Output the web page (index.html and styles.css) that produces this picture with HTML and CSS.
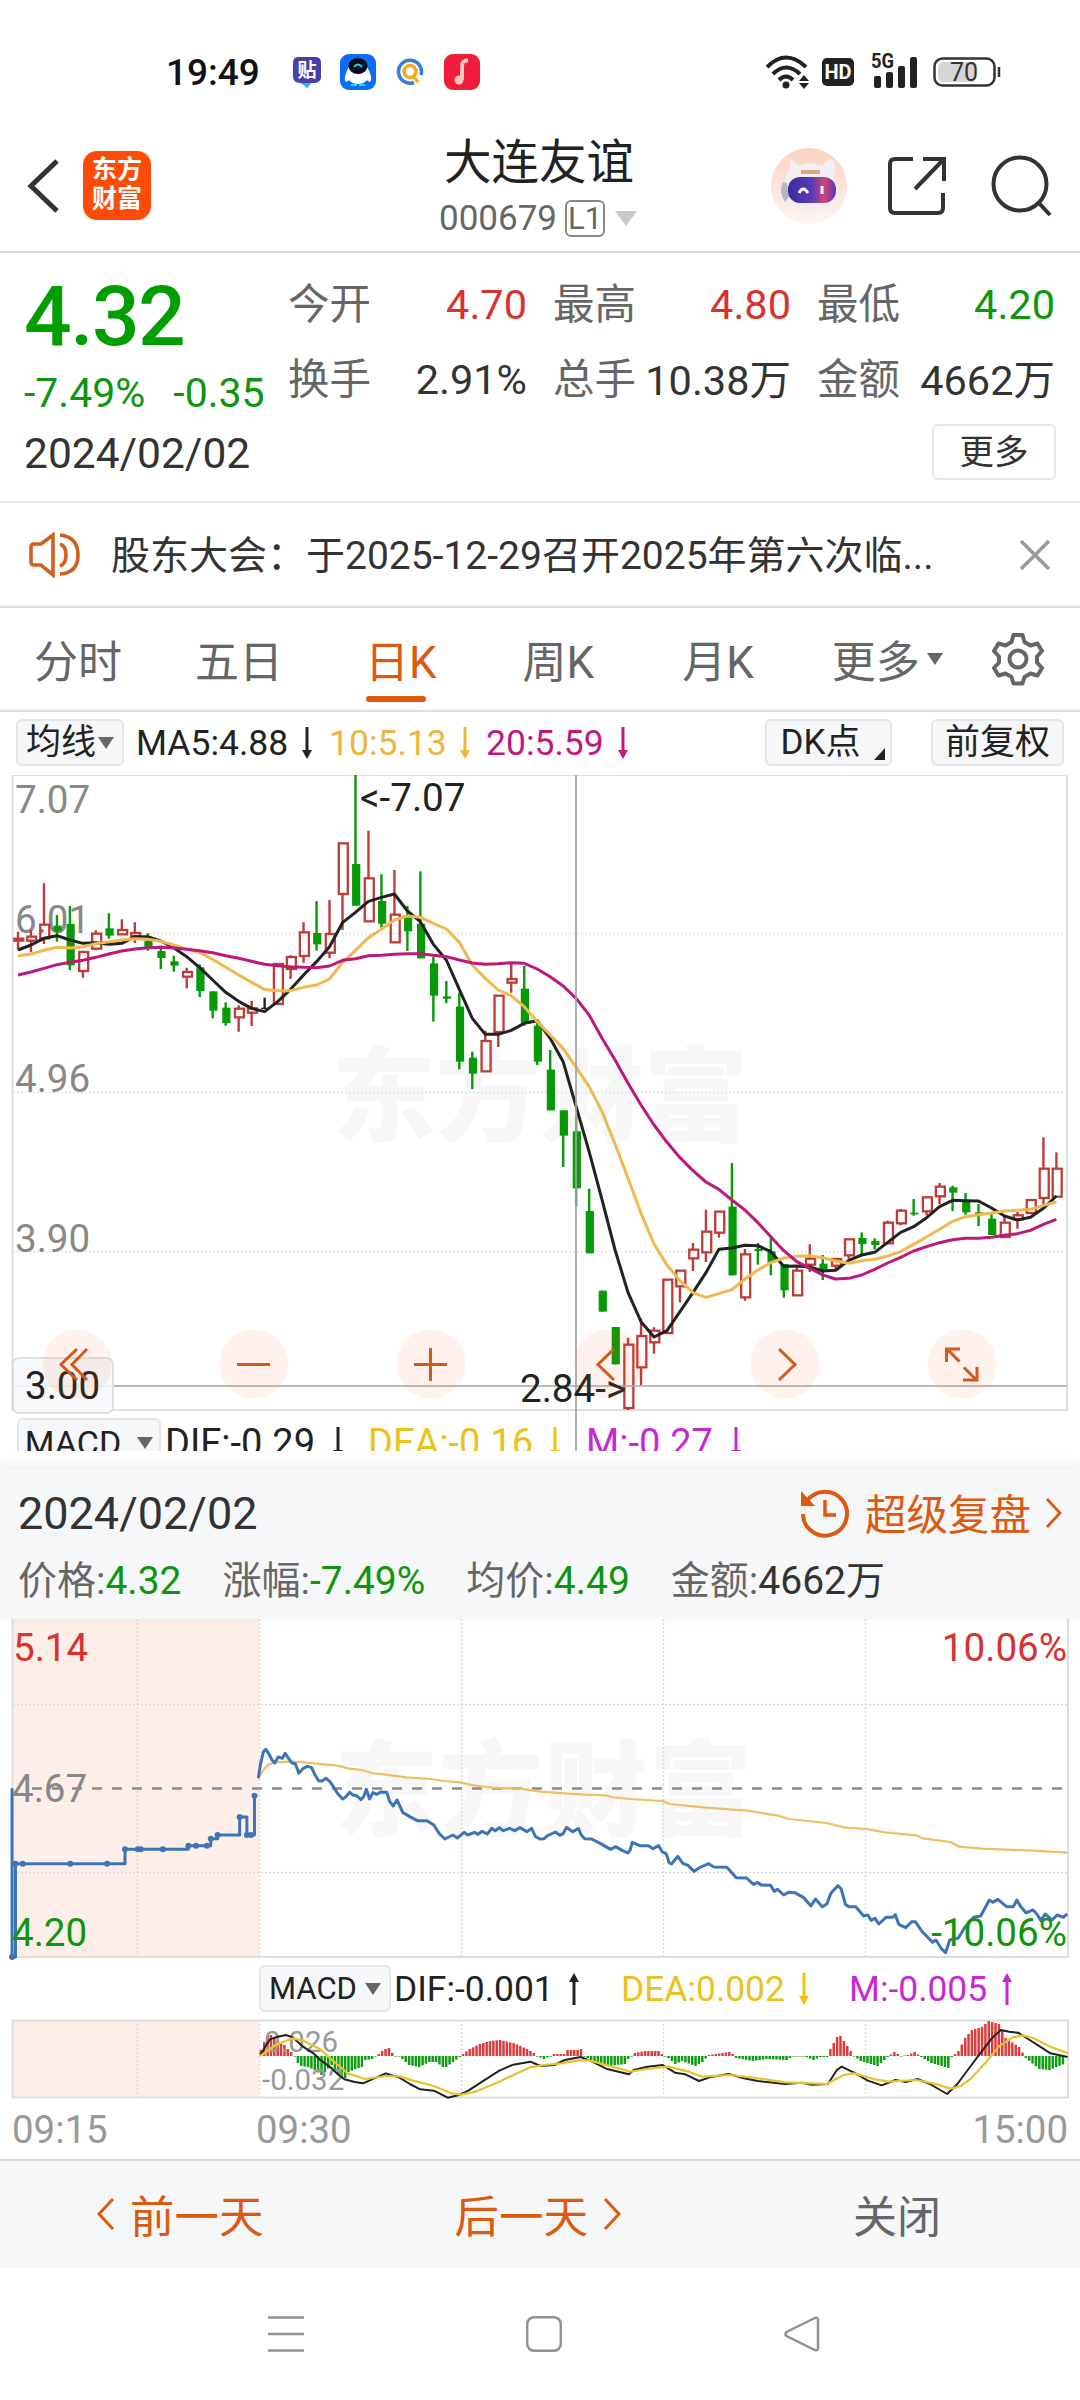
FILE: index.html
```
<!DOCTYPE html>
<html lang="zh-CN">
<head>
    <meta charset="UTF-8">
    <meta name="viewport" content="width=device-width, initial-scale=1.0">
    <title>大连友谊 000679</title>
    <link rel="stylesheet" href="styles.css">
</head>
<body>
    <div class="status-bar">
        <span class="clock">19:49</span>
        <svg class="app-tie" width="28" height="32" viewBox="0 0 28 32"><path d="M5 1h18q5 0 5 6v14q0 5-6 6h-4l-4 5-4-5H6q-6-1-6-6V7q0-6 5-6z" fill="#4a3fa8"/><path d="M2 24q6 3 12 8l4-5H6z" fill="#26b9e8"/><text x="14" y="21" font-size="19" font-weight="700" fill="#fff" text-anchor="middle">贴</text></svg>
        <svg class="app-qq" width="36" height="36" viewBox="0 0 36 36"><rect width="36" height="36" rx="9" fill="#0b6cf5"/><path d="M9 13h18q5 8 4 14-2 2-4-1-3 4-9 4t-9-4q-2 3-4 1-1-6 4-14z" fill="#fff"/><ellipse cx="18" cy="12" rx="9.500" ry="8" fill="#06101c"/><path d="M14 13q4-5 8 0" fill="none" stroke="#29d3e8" stroke-width="2"/><path d="M11 30h6v2h-6zM19 30h6v2h-6z" fill="#19dfe0"/></svg>
        <svg class="app-search" width="28" height="28" viewBox="0 0 28 28" fill="none" stroke-width="3.500"><path d="M18 24.500A11.500 11.500 0 1 1 25 17" stroke="#3a7be0"/><circle cx="14" cy="13.500" r="6" stroke="#f6a823"/><path d="M17 18l5 6" stroke="#f6a823"/></svg>
        <svg class="app-music" width="36" height="36" viewBox="0 0 36 36"><rect width="36" height="36" rx="9" fill="#f01d3a"/><path d="M24 6q-6 1-6 6v14" fill="none" stroke="#ffc4c4" stroke-width="4"/><circle cx="15" cy="26" r="4.500" fill="#ffc4c4"/></svg>
        <svg class="wifi" width="44" height="34" viewBox="0 0 44 34" fill="none" stroke="#222" stroke-width="4"><path d="M1 12Q20-7 40 12M7 19q13-13 27 0M13 25q7-7 14 0"/><circle cx="20" cy="30" r="3.500" fill="#222" stroke="none"/><path d="M33 26l5-6 5 6zM33 28h10l-5 6z" fill="#222" stroke="none"/></svg>
        <span class="hd">HD</span>
        <svg class="signal" width="46" height="38" viewBox="0 -4 46 38" fill="#222"><text x="0" y="13" font-size="20" font-weight="700" textLength="23" lengthAdjust="spacingAndGlyphs">5G</text><rect x="3" y="21" width="7" height="12" rx="2"/><rect x="15" y="17" width="7" height="16" rx="2"/><rect x="27" y="11" width="7" height="22" rx="2"/><rect x="39" y="2" width="7" height="31" rx="2"/></svg>
        <svg class="battery" width="68" height="30" viewBox="0 0 68 30"><rect x="1.500" y="1.500" width="60" height="27" rx="8" fill="#fff" stroke="#333" stroke-width="2.500"/><path d="M11 5h30v20H11q-6 0-6-6v-8q0-6 6-6z" fill="#d5d5d5"/><path d="M66 10v10" stroke="#333" stroke-width="2.500"/><text x="31" y="24" font-size="25" fill="#333" text-anchor="middle">70</text></svg>
    </div>

    <header class="header">
        <svg class="back" width="34" height="58" viewBox="0 0 34 58"><path d="M31 4L5 29l26 25" fill="none" stroke="#333" stroke-width="5"/></svg>
        <div class="logo">东方<br>财富</div>
        <div class="stock">
            <h1>大连友谊</h1>
            <div class="code">000679<span class="level">L1</span><i class="arrow-down"></i></div>
        </div>
        <svg class="robot" width="76" height="76" viewBox="0 0 76 76">
            <defs>
                <linearGradient id="halo" x1="0" y1="0" x2="0" y2="1"><stop offset="0" stop-color="#fcd2c2"/><stop offset="1" stop-color="#fff5f0"/></linearGradient>
                <linearGradient id="visor"><stop offset="0" stop-color="#3a2b9e"/><stop offset=".5" stop-color="#5a3ab8"/><stop offset=".75" stop-color="#d0447a"/><stop offset="1" stop-color="#5a3ab8"/></linearGradient>
            </defs>
            <circle cx="38" cy="38" r="38" fill="url(#halo)"/>
            <path d="M20 19q-3-7 1-7 3 1 6 6 10-6 24 0 4-6 10-7 4 1 3 12l-2 8q6 6 6 18-2 6-8 8-8 5-22 5-17 0-22-8-8-3-7-12l5-11q2-8 6-12z" fill="#f1eff3"/>
            <path d="M12 34q-5 10 2 20l4-5-2-14z" fill="#b9b5c4"/>
            <rect x="17" y="29" width="48" height="26" rx="12" fill="url(#visor)"/>
            <path d="M30 24h19" stroke="#d9a87a" stroke-width="4"/>
            <path d="M28 45q4-8 9 0M51 38v8" fill="none" stroke="#fff" stroke-width="3"/>
        </svg>
        <svg class="share" width="58" height="58" viewBox="0 0 58 58" fill="none" stroke="#333" stroke-width="4"><path d="M25 2H7Q2 2 2 7v44q0 5 5 5h43q5 0 5-5V36M35 2h21v22M55 3L27 32"/></svg>
        <svg class="search" width="62" height="62" viewBox="0 0 62 62" fill="none" stroke="#333" stroke-width="4"><circle cx="29" cy="29" r="26.500"/><path d="M47 47l12 13"/></svg>
    </header>

    <section class="quote">
        <div class="price-box">
            <div class="price">4.32</div>
            <div class="change"><span>-7.49%</span><span>-0.35</span></div>
        </div>
        <div class="stats">
            <div class="stat"><span>今开</span><b class="red">4.70</b></div>
            <div class="stat"><span>最高</span><b class="red">4.80</b></div>
            <div class="stat"><span>最低</span><b class="green">4.20</b></div>
            <div class="stat"><span>换手</span><b>2.91%</b></div>
            <div class="stat"><span>总手</span><b class="mixed">10.38万</b></div>
            <div class="stat"><span>金额</span><b class="mixed">4662万</b></div>
        </div>
        <div class="date-row"><span>2024/02/02</span><button class="more">更多</button></div>
    </section>

    <section class="notice">
        <svg width="52" height="46" viewBox="0 0 52 46" fill="none" stroke="#d0601c" stroke-width="3.600"><path d="M24 3v40L12 33H5q-3 0-3-3V15q0-3 3-3h7z"/><path d="M31 12q6 2 6 11t-6 11M31 3q18 2 18 20T31 42"/></svg>
        <p>股东大会：于2025-12-29召开2025年第六次临...</p>
        <svg width="32" height="32" viewBox="0 0 32 32" stroke="#999" stroke-width="3.500"><path d="M2 2l28 28M30 2L2 30"/></svg>
    </section>

    <nav class="tabs">
        <span>分时</span>
        <span>五日</span>
        <span class="active">日K</span>
        <span>周K</span>
        <span>月K</span>
        <span class="tab-more">更多<i class="arrow-down"></i></span>
        <svg width="54" height="54" viewBox="0 0 54 54" fill="none" stroke="#666" stroke-width="4"><path d="M22.500 3h9l2 7 6 3.500 7-2 4.500 7.500-5 5.500v6l5 5.500-4.500 7.500-7-2-6 3.500-2 6.500h-9l-2-6.500-6-3.500-7 2L3 36l5-5.500v-6L3 19l4.500-7.500 7 2 6-3.500z" stroke-linejoin="round"/><circle cx="27" cy="27" r="8.500"/></svg>
    </nav>

    <div class="indicators">
        <button class="chip ma">均线<i class="arrow-down"></i></button>
        <span class="ma5">MA5:4.88</span><svg class="arr" viewBox="0 0 10 32"><path d="M5 0v29"/><path d="M0 23h10L5 32z"/></svg>
        <span class="ma10">10:5.13</span><svg class="arr ma10" viewBox="0 0 10 32"><path d="M5 0v29"/><path d="M0 23h10L5 32z"/></svg>
        <span class="ma20">20:5.59</span><svg class="arr ma20" viewBox="0 0 10 32"><path d="M5 0v29"/><path d="M0 23h10L5 32z"/></svg>
        <button class="chip dk">DK点<i class="corner"></i></button>
        <button class="chip fq">前复权</button>
    </div>

    <div class="kchart">
        <svg id="kline" width="1080" height="676" viewBox="0 775 1080 676">
            <text class="watermark" x="332" y="1134" textLength="416">东方财富</text>
            <path class="grid" d="M13 933.500H1067M13 1092.500H1067M13 1251.500H1067"/>
            <path class="frame" d="M12.500 775V1410H1067V775H12"/>
            <g class="axis">
                <text x="15" y="813">7.07</text>
                <text x="15" y="933">6.01</text>
                <text x="15" y="1092">4.96</text>
                <text x="15" y="1252">3.90</text>
            </g>
            <g id="candles"></g>
            <g id="averages"></g>
            <path class="cross" d="M13 1386H1067M576 775V1451"/>
            <text class="mark" x="360" y="811">&lt;-7.07</text>
            <text class="mark" x="520" y="1402">2.84-&gt;</text>
            <rect class="price-tag" x="13" y="1358" width="100" height="55" rx="6"/>
            <text class="mark" x="25" y="1399">3.00</text>
            <g class="tools">
                <circle cx="77" cy="1364" r="34.500"/><circle cx="254" cy="1364" r="34.500"/><circle cx="431" cy="1364" r="34.500"/>
                <circle cx="608" cy="1364" r="34.500"/><circle cx="785" cy="1364" r="34.500"/><circle cx="962" cy="1364" r="34.500"/>
                <path d="M77 1349l-16 15.500 16 15.500M87 1349l-15 15.500 15 15.500M237 1364.500h33M414 1364.500h33M430.500 1348v33M614 1349l-16 15.500 16 15.500M779 1349l16 15.500-16 15.500M946.500 1362v-13H960M947.500 1349.500l12 12M977 1367v13H963M976 1379.500l-12-12"/>
            </g>
        </svg>
        <div class="macd-row">
            <button class="chip">MACD<i class="arrow-down"></i></button>
            <span class="dif">DIF:-0.29</span><svg class="arr" viewBox="0 0 10 32"><path d="M5 0v29"/><path d="M0 23h10L5 32z"/></svg>
            <span class="dea">DEA:-0.16</span><svg class="arr dea" viewBox="0 0 10 32"><path d="M5 0v29"/><path d="M0 23h10L5 32z"/></svg>
            <span class="m">M:-0.27</span><svg class="arr m" viewBox="0 0 10 32"><path d="M5 0v29"/><path d="M0 23h10L5 32z"/></svg>
        </div>
    </div>

    <section class="panel">
        <div class="panel-top">
            <span class="panel-date">2024/02/02</span>
            <svg width="50" height="50" viewBox="0 0 50 50" fill="none" stroke="#db5a10" stroke-width="4"><path d="M7 13A22 22 0 1 1 3 26"/><path d="M1 3v15h14z" fill="#db5a10" stroke="none"/><path d="M25 12v15h11" stroke-width="3.500"/></svg>
            <span class="replay">超级复盘</span>
            <svg width="17" height="30" viewBox="0 0 17 30" fill="none" stroke="#db5a10" stroke-width="2.800"><path d="M2 1l13 14L2 29"/></svg>
        </div>
        <div class="panel-stats">
            <span>价格:<b class="green">4.32</b></span>
            <span>涨幅:<b class="green">-7.49%</b></span>
            <span>均价:<b class="green">4.49</b></span>
            <span>金额:<b>4662万</b></span>
        </div>
    </section>

    <div class="day-chart">
        <svg id="minute" width="1080" height="342" viewBox="0 1619 1080 342">
            <rect x="12" y="1619" width="247" height="338" fill="#fdeee8"/>
            <text class="watermark" x="334" y="1828" textLength="419">东方财富</text>
            <path class="grid dark" d="M13 1704.500H1067M13 1872.500H1067M137.500 1619V1957M259.500 1619V1957M461.500 1619V1957M663.500 1619V1957M865.500 1619V1957"/>
            <path class="frame" d="M12.500 1619V1957H1068V1619"/>
            <path class="prev-close" d="M32 1788.500H1067"/>
            <g id="prices"></g>
            <g class="axis">
                <text x="13" y="1661" class="up">5.14</text>
                <text x="12" y="1802">4.67</text>
                <text x="12" y="1946" class="down">4.20</text>
                <text x="1067" y="1661" class="up" text-anchor="end">10.06%</text>
                <text x="1067" y="1946" class="down" text-anchor="end">-10.06%</text>
            </g>
        </svg>
        <div class="day-macd">
            <button class="chip">MACD<i class="arrow-down"></i></button>
            <span class="dif">DIF:-0.001</span><svg class="arr" viewBox="0 0 10 32"><path d="M5 32V3"/><path d="M0 9h10L5 0z"/></svg>
            <span class="dea">DEA:0.002</span><svg class="arr dea" viewBox="0 0 10 32"><path d="M5 0v29"/><path d="M0 23h10L5 32z"/></svg>
            <span class="m">M:-0.005</span><svg class="arr m" viewBox="0 0 10 32"><path d="M5 32V3"/><path d="M0 9h10L5 0z"/></svg>
        </div>
        <svg id="macd" width="1080" height="84" viewBox="0 2016 1080 84">
            <rect x="12" y="2020" width="247" height="77" fill="#fdeee8"/>
            <path class="grid dark" d="M137.500 2020V2098M259.500 2020V2098M461.500 2020V2098M663.500 2020V2098M865.500 2020V2098"/>
            <path class="frame" d="M12.500 2020.500H1068V2097.500H12.500z"/>
            <g id="bars"></g>
            <g class="axis small">
                <text x="264" y="2052">0.026</text>
                <text x="262" y="2090">-0.032</text>
            </g>
            <g id="macd-lines"></g>
        </svg>
        <div class="times"><span>09:15</span><span>09:30</span><span>15:00</span></div>
    </div>

    <footer class="day-nav">
        <span class="prev"><svg width="18" height="32" viewBox="0 0 18 32"><path d="M16 1L2 16l14 15"/></svg>前一天</span>
        <span class="next">后一天<svg width="18" height="32" viewBox="0 0 18 32"><path d="M2 1l14 15L2 31"/></svg></span>
        <span class="close">关闭</span>
    </footer>

    <div class="system-nav">
        <svg width="36" height="36" viewBox="0 0 36 36"><path d="M0 1.500h36M0 18h36M0 34.500h36"/></svg>
        <svg width="36" height="36" viewBox="0 0 36 36"><rect x="1.200" y="1.200" width="33.600" height="33.600" rx="7"/></svg>
        <svg width="36" height="36" viewBox="0 0 36 36"><path d="M31 2L2.500 16q-2 2 0 4L31 34q3 1 3-2V4q0-3-3-2z"/></svg>
    </div>

    <script src="script.js"></script>
</body>
</html>
```
FILE: styles.css
```
* {
    box-sizing: border-box;
}

body {
    margin: 0;
    width: 1080px;
    height: 2400px;
    overflow: hidden;
    background-color: #fff;
    color: #333;
    font-family: Roboto, "Noto Sans CJK SC", sans-serif;
    font-size: 35px;
    white-space: nowrap;
}

svg {
    display: block;
    flex: none;
}

b {
    font-weight: 400;
    color: #333;
}

button {
    font: inherit;
    color: inherit;
    padding: 0;
}

.red { color: #d93030; }
.green { color: #0d960d; }

.arrow-down {
    display: inline-block;
    border-left: 8px solid transparent;
    border-right: 8px solid transparent;
    border-top: 12px solid #666;
}

/* status bar */
.status-bar {
    display: flex;
    align-items: center;
    height: 124px;
    padding: 20px 0 0 166px;
}

.clock {
    width: 127px;
    font-size: 37px;
    font-weight: 500;
    color: #111;
}

.app-qq { margin-left: 19px; }
.app-search { margin-left: 20px; }
.app-music { margin-left: 20px; }
.wifi { margin-left: 286px; }

.hd {
    margin-left: 12px;
    width: 32px;
    height: 28px;
    border-radius: 5px;
    background-color: #222;
    color: #fff;
    font-size: 20px;
    font-weight: 700;
    line-height: 29px;
    text-align: center;
}

.signal { margin: -4px 0 0 17px; }
.battery { margin-left: 16px; }

/* header */
.header {
    display: flex;
    align-items: center;
    height: 129px;
    padding: 0 0 4px 26px;
    border-bottom: 2px solid #d8d8d8;
}

.logo {
    margin-left: 23px;
    width: 68px;
    height: 69px;
    padding-top: 4px;
    border-radius: 14px;
    background-color: #ff4b08;
    color: #fff;
    font-size: 25px;
    font-weight: 700;
    line-height: 29px;
    text-align: center;
}

.stock {
    margin-left: 290px;
    padding-top: 2px;
    width: 330px;
}

.stock h1 {
    margin: 0;
    padding-left: 3px;
    font-size: 47.500px;
    font-weight: 400;
    line-height: 62px;
    color: #222;
}

.code {
    display: flex;
    align-items: center;
    height: 46px;
    margin: 2px 0 0 -2px;
    font-size: 35px;
    color: #666;
}

.level {
    width: 40px;
    height: 37px;
    margin-left: 8px;
    border: 2px solid #888;
    border-radius: 6px;
    font-size: 31px;
    line-height: 34px;
    text-align: center;
}

.code .arrow-down {
    margin-left: 10px;
    border-width: 15px 11px 0;
    border-top-color: #c8c8c8;
}

.share { margin-left: 41px; }
.search { margin-left: 45px; }

/* quote */
.quote {
    display: grid;
    grid-template-columns: 288px 1fr;
    grid-template-rows: 160px 89px;
    height: 250px;
    border-bottom: 2px solid #ececec;
}

.price-box {
    padding: 14px 0 0 24px;
    color: #0d960d;
}

.price {
    height: 96px;
    font-size: 84px;
    font-weight: 500;
    line-height: 100px;
    letter-spacing: -1.600px;
    color: #009e00;
}

.change {
    display: flex;
    gap: 28px;
    padding-top: 5px;
    font-size: 41px;
    line-height: 50px;
}

.stats {
    display: grid;
    grid-template-columns: 239px 238px 238px;
    grid-template-rows: 75px 75px;
    column-gap: 26px;
    padding-top: 14px;
    font-size: 41.500px;
}

.stat {
    display: flex;
    justify-content: space-between;
    align-items: center;
}

.stat span {
    color: #666;
    margin-top: -7px;
}

.stat .mixed { margin-top: -6px; }

.date-row {
    grid-column: 1 / 3;
    display: flex;
    justify-content: space-between;
    align-items: center;
    padding: 0 24px 11px;
    font-size: 42.500px;
}

.date-row span { padding-top: 3px; }

.more {
    width: 124px;
    height: 56px;
    border: 2px solid #e8e8e8;
    border-radius: 6px;
    background-color: #fff;
    font-size: 34.500px;
    line-height: 50px;
}

/* notice */
.notice {
    display: flex;
    align-items: center;
    height: 105px;
    padding: 0 29px;
    border-bottom: 2px solid #dcdcdc;
}

.notice p {
    flex: 1;
    margin: -5px 0 0 30px;
    font-size: 39px;
}

/* tabs */
.tabs {
    display: flex;
    align-items: center;
    height: 104px;
    border-bottom: 2px solid #dcdcdc;
    padding-left: 34px;
    font-size: 44px;
    color: #666;
}

.tabs span {
    position: relative;
    margin-right: 73px;
}

.tabs span:nth-child(2) { margin-right: 82px; }
.tabs span:nth-child(3) { margin-right: 86px; }
.tabs span:nth-child(4) { margin-right: 88px; }
.tabs span:nth-child(5) { margin-right: 78px; }

.tabs .active { color: #db5a10; }

.tabs .active::after {
    content: "";
    position: absolute;
    left: 1px;
    bottom: -11px;
    width: 60px;
    height: 6px;
    border-radius: 3px;
    background-color: #db5a10;
}

.tabs .tab-more {
    display: flex;
    align-items: center;
    gap: 7px;
    margin-right: 48px;
}

/* indicator values */
.indicators, .day-macd, .macd-row {
    display: flex;
    align-items: center;
}

.indicators {
    height: 63px;
    padding: 0 16px 2px;
    color: #222;
}

.chip {
    display: flex;
    align-items: center;
    justify-content: center;
    height: 47px;
    border: 2px solid #e4e6ea;
    border-radius: 6px;
    background-color: #f6f7f9;
    color: #222;
    line-height: 43px;
}

.arr {
    width: 10px;
    height: 32px;
    stroke: #222;
    fill: #222;
    color: #222;
}

.arr path:first-child { stroke-width: 3; }
.arr path:last-child { stroke: none; }

.chip.ma { width: 108px; margin-right: 12px; }
.chip.ma .arrow-down { margin-left: 2px; }
.indicators span { font-size: 35.500px; }
.ma5 { width: 166px; }
span.ma10 { width: 131px; margin-left: 17px; color: #f0b440; }
span.ma20 { width: 132px; margin-left: 16px; color: #c0187e; }
svg.ma10 { stroke: #f0b440; fill: #f0b440; }
svg.ma20 { stroke: #c0187e; fill: #c0187e; }

.chip.dk { position: relative; width: 127px; margin-left: auto; padding-right: 16px; }
.chip.fq { width: 133px; margin-left: 39px; }

.corner {
    position: absolute;
    right: 5px;
    bottom: 4px;
    border-left: 11px solid transparent;
    border-bottom: 12px solid #222;
}

/* charts */
.kchart {
    position: relative;
    height: 676px;
    overflow: hidden;
}

.watermark {
    font-size: 104px;
    font-weight: 900;
    fill: #f7f7f7;
}

.grid {
    stroke: #e4e4e4;
    stroke-width: 1.500;
    stroke-dasharray: 2 2;
}

.grid.dark { stroke: #dadada; }

.frame {
    fill: none;
    stroke: #dedede;
    stroke-width: 2;
}

.cross {
    stroke: #a4a4a4;
    stroke-width: 1.700;
}

.axis { font-size: 38.600px; fill: #888; }
.axis.small { font-size: 29.500px; fill: #999; }
.axis .up { fill: #d93030; }
.axis .down { fill: #0d960d; }
.mark { font-size: 38.600px; fill: #222; }

.price-tag {
    fill: #f6f8fb;
    fill-opacity: .9;
    stroke: #d5d8dc;
    stroke-width: 1.500;
}

.tools circle { fill: #ff5a14; fill-opacity: .085; }
.tools path { fill: none; stroke: #d2591b; stroke-width: 3; }

.prev-close {
    stroke: #8a8a8a;
    stroke-width: 2.400;
    stroke-dasharray: 10 10;
}

.line { fill: none; stroke-linejoin: round; vector-effect: non-scaling-stroke; }

.macd-row {
    position: absolute;
    left: 17px;
    top: 643px;
    height: 50px;
    font-size: 38px;
}

.macd-row .chip { width: 144px; height: 50px; margin-right: 4px; font-size: 34px; line-height: 44px; }
.macd-row .arrow-down { margin-left: 16px; }
.dif { color: #222; }
span.dea { color: #e8c220; }
span.m { color: #c828d2; }
svg.dea { stroke: #f0c010; fill: #f0c010; }
svg.m { stroke: #c828d2; fill: #c828d2; }
.macd-row .dif { width: 168px; }
.macd-row span.dea { width: 182px; margin-left: 25px; }
.macd-row span.m { width: 145px; margin-left: 26px; }

/* selected day panel */
.panel {
    position: relative;
    height: 150px;
    margin-top: 18px;
    background-color: #f6f7f9;
    box-shadow: 0 -4px 14px rgba(0, 0, 0, 0.07);
}

.panel-top {
    display: flex;
    align-items: center;
    height: 88px;
    padding: 0 18px;
}

.panel-date { flex: 1; font-size: 45px; }
.replay { margin: -3px 14px 0 15px; font-size: 41.500px; color: #db5a10; }

.panel-stats {
    display: flex;
    gap: 41px;
    padding-left: 18px;
    font-size: 39px;
    line-height: 48px;
    color: #666;
}

.day-chart { background-color: #fff; }

.day-macd {
    height: 55px;
    padding-left: 259px;
}

.day-macd .chip { width: 132px; margin-right: 3px; font-size: 31px; }
.day-macd .arrow-down { margin-left: 8px; }
.day-macd span { font-size: 35.400px; }
.day-macd .dif { width: 175px; }
.day-macd span.dea { width: 178px; margin-left: 42px; }
.day-macd span.m { width: 153px; margin-left: 40px; }

.times {
    display: flex;
    height: 59px;
    padding: 0 12px 0 12px;
    font-size: 38.400px;
    line-height: 60px;
    color: #999;
}

.times span:first-child { width: 244px; }
.times span:last-child { margin-left: auto; }

/* bottom bars */
.day-nav {
    position: relative;
    display: flex;
    align-items: center;
    height: 109px;
    padding-bottom: 2px;
    border-top: 2px solid #d8dcdc;
    background-color: #f6f7f9;
    font-size: 44.500px;
    color: #db5a10;
}

.day-nav span {
    display: flex;
    align-items: center;
}

.day-nav svg { fill: none; stroke: #db5a10; stroke-width: 3; }
.prev { margin-left: 97px; gap: 15px; }
.next { margin-left: 191px; gap: 15px; }
.day-nav .close { margin-left: 232px; font-size: 44px; color: #666; }

.system-nav {
    display: flex;
    justify-content: space-between;
    padding: 48px 260px 0 268px;
}

.system-nav svg { fill: none; stroke: #929292; stroke-width: 2.500; }
```
FILE: script.js
```
const NS = 'http://www.w3.org/2000/svg';
const STEP = 12.98;

function add(parent, tag, attrs) {
    const el = document.createElementNS(NS, tag);
    for (const key in attrs) el.setAttribute(key, attrs[key]);
    parent.appendChild(el);
    return el;
}

function line(parent, points, color, width) {
    add(parent, 'polyline', { class: 'line', points: points, stroke: color, 'stroke-width': width });
}

// Candles: color, high, body top, body bottom, low
const candles = [
    'r 515 536 538 568', 'r 510 530 542 577', 'r 370 494 535 552', 'g 465 497 514 545', 'g 438 492 616 630',
    'r 572 576 633 653', 'r 511 521 566 571', 'g 460 505 527 536', 'r 478 510 523 523', 'r 487 519 528 549',
    'g 520 543 565 572', 'g 557 573 594 627', 'g 587 604 617 635', 'r 623 636 650 685', 'g 613 622 693 711',
    'g 694 694 752 775', 'g 727 743 789 797', 'r 736 746 772 815', 'r 722 745 758 798', 'k 713 743 746 746',
    'r 612 612 732 732', 'r 586 591 627 657', 'r 487 517 588 608', 'g 423 519 553 572', 'r 420 522 578 595',
    'r 250 250 402 510', 'g 45 312 437 437', 'r 212 355 484 484', 'g 343 423 491 503', 'r 330 464 547 547',
    'g 438 465 514 573', 'g 334 491 595 595', 'g 590 610 707 785', 'g 663 709 716 730', 'g 698 740 905 928',
    'g 875 893 941 987', 'r 812 843 934 934', 'r 707 707 816 861', 'r 608 657 668 698', 'g 618 686 790 797',
    'g 787 797 905 915', 'g 870 929 1051 1051', 'g 1051 1051 1127 1221', 'g 1069 1114 1285 1339', 'g 1286 1353 1480 1480',
    'g 1592 1592 1655 1655', 'g 1701 1701 1813 1813', 'r 1733 1754 1944 1950', 'r 1676 1728 1822 1875', 'r 1702 1712 1747 1781',
    'r 1559 1559 1719 1719', 'r 1532 1532 1579 1627', 'r 1449 1469 1495 1533', 'r 1349 1415 1477 1506', 'r 1355 1355 1418 1433',
    'g 1209 1340 1546 1546', 'r 1467 1483 1612 1622', 'g 1449 1467 1473 1514', 'g 1433 1474 1508 1546', 'g 1512 1512 1591 1613',
    'r 1522 1532 1606 1606', 'r 1453 1496 1514 1536', 'g 1485 1511 1529 1560', 'r 1497 1497 1517 1531', 'r 1438 1438 1486 1496',
    'g 1417 1434 1452 1484', 'g 1435 1443 1455 1468', 'r 1382 1388 1450 1450', 'r 1347 1352 1390 1396', 'g 1317 1358 1363 1367',
    'r 1312 1312 1354 1366', 'r 1269 1280 1309 1333', 'g 1277 1282 1298 1353', 'g 1299 1321 1357 1364', 'g 1332 1357 1361 1398',
    'g 1362 1376 1425 1425', 'r 1371 1388 1431 1431', 'r 1356 1366 1378 1406', 'r 1320 1320 1359 1359', 'r 1132 1226 1314 1332',
    'r 1177 1226 1310 1310'
];

const ma5 = [570, 555, 535, 527, 540, 550, 548, 553, 550, 530, 530, 543, 563, 590, 623, 660, 697, 724, 745, 755, 725, 688, 645, 605, 560, 488, 457, 424, 412, 402, 453, 485, 553, 600, 688, 775, 823, 823, 811, 790, 782, 835, 905, 1040, 1175, 1320, 1470, 1598, 1685, 1731, 1712, 1655, 1598, 1538, 1468, 1464, 1456, 1457, 1475, 1519, 1518, 1521, 1533, 1531, 1501, 1485, 1477, 1447, 1417, 1400, 1373, 1340, 1321, 1322, 1323, 1344, 1368, 1380, 1372, 1345, 1308];
const ma10 = [588, 582, 571, 562, 564, 560, 551, 545, 540, 536, 538, 544, 555, 568, 577, 598, 622, 645, 667, 688, 692, 692, 682, 675, 657, 607, 571, 533, 508, 480, 468, 472, 490, 507, 547, 615, 655, 690, 707, 740, 785, 825, 865, 922, 980, 1055, 1152, 1255, 1360, 1452, 1515, 1562, 1598, 1612, 1601, 1589, 1557, 1530, 1508, 1494, 1489, 1487, 1493, 1503, 1510, 1502, 1498, 1488, 1475, 1453, 1431, 1408, 1384, 1370, 1364, 1359, 1353, 1351, 1348, 1336, 1326];
const ma20 = [645, 636, 625, 614, 607, 601, 592, 582, 573, 567, 563, 562, 564, 568, 572, 578, 587, 595, 604, 613, 617, 620, 622, 623, 618, 601, 596, 587, 586, 583, 581, 581, 586, 590, 600, 609, 613, 611, 608, 610, 627, 650, 678, 715, 765, 835, 900, 970, 1035, 1095, 1147, 1193, 1232, 1266, 1288, 1320, 1350, 1388, 1430, 1472, 1505, 1525, 1545, 1557, 1555, 1545, 1528, 1509, 1492, 1473, 1460, 1448, 1439, 1435, 1435, 1432, 1426, 1421, 1411, 1393, 1378];

const COLORS = { r: '#bf3b38', g: '#079a07', k: '#222' };
const candleY = v => 760 + v / 3;
const candleX = i => 18 + STEP * i;

const candleBox = document.getElementById('candles');
candles.forEach((row, i) => {
    const [type, ...values] = row.split(' ');
    const [high, top, bottom, low] = values.map(v => candleY(Number(v)));
    const x = candleX(i);
    const color = COLORS[type];
    if (type === 'r') {
        const h = Math.max(bottom - top, 2);
        add(candleBox, 'path', { d: `M${x} ${high}V${top}M${x} ${bottom}V${low}`, stroke: color, 'stroke-width': 2.4 });
        add(candleBox, 'rect', { x: x - 3.7, y: top, width: 9, height: h, fill: 'none', stroke: color, 'stroke-width': 2.3 });
    } else {
        add(candleBox, 'path', { d: `M${x} ${high}V${low}`, stroke: color, 'stroke-width': 2.4 });
        add(candleBox, 'rect', { x: x - 3.4, y: top, width: 8.2, height: Math.max(bottom - top, 1.5), fill: color });
    }
});

const averages = document.getElementById('averages');
[[ma5, '#222'], [ma10, '#f0b84e'], [ma20, '#bd187c']].forEach(([data, color]) => {
    line(averages, data.map((v, i) => candleX(i) + ',' + candleY(v)).join(' '), color, 3);
});

// Intraday price
const prices = document.getElementById('prices');
const scaled = add(prices, 'g', { transform: 'translate(0 1610) scale(.34435 .33333)' });
const auction = '35,535 35,1041 45,1041 45,761 363,761 363,718 547,718 547,707 612,707 612,686 632,686 632,675 696,675 696,621 717,621 717,675 739,675 739,557';
const average = '753,500 765,480 780,463 800,457 840,455 870,456 920,461 980,467 1010,475 1050,480 1080,489 1120,494 1180,502 1250,507 1290,513 1340,518 1380,527 1430,533 1510,536 1568,545 1640,550 1700,554 1760,556 1775,561 1830,567 1925,573 1945,582 2050,593 2170,602 2260,617 2290,627 2400,639 2450,652 2515,657 2570,667 2660,676 2680,685 2760,696 2785,710 2850,716 3000,722 3099,728';
const session = '750,505 757,460 765,425 772,418 780,430 790,450 798,459 808,441 820,445 828,430 838,445 848,459 858,462 868,490 880,475 893,469 905,473 915,495 925,512 935,513 947,505 958,515 968,530 980,550 995,567 1005,560 1015,547 1025,555 1037,558 1048,569 1056,560 1064,538 1073,567 1083,548 1095,553 1105,546 1123,547 1132,575 1142,588 1153,570 1170,608 1190,620 1212,632 1240,632 1260,645 1275,670 1292,687 1315,675 1328,684 1348,667 1358,675 1378,667 1388,673 1400,664 1415,672 1428,655 1438,662 1450,653 1462,662 1480,655 1495,662 1510,653 1530,665 1544,655 1555,680 1568,687 1580,686 1590,677 1613,666 1626,676 1636,670 1645,652 1663,665 1680,656 1688,675 1698,686 1718,687 1743,700 1773,718 1788,710 1808,722 1823,729 1830,720 1836,697 1858,707 1883,707 1896,716 1913,707 1923,725 1935,732 1943,758 1950,762 1968,739 1983,760 1998,766 2016,784 2033,772 2058,761 2073,771 2111,772 2138,803 2168,804 2188,823 2200,817 2210,825 2238,826 2248,844 2258,838 2276,855 2290,847 2308,848 2333,862 2355,888 2368,867 2388,890 2401,882 2413,850 2433,827 2443,837 2455,883 2465,890 2485,890 2508,918 2520,915 2530,931 2541,925 2552,942 2573,922 2593,922 2600,914 2610,943 2630,953 2648,935 2658,935 2678,965 2708,997 2718,990 2733,1015 2746,1028 2758,990 2783,984 2803,950 2828,922 2848,918 2873,870 2883,877 2898,868 2923,890 2943,890 2953,870 2963,888 2980,909 3000,900 3011,912 3023,932 3035,912 3055,930 3070,915 3088,922 3099,912';
line(scaled, average, '#eebf62', 2.2);
line(scaled, auction, '#3d74b8', 3);
line(scaled, session, '#3d74b8', 3);
[[35, 1041], [45, 761], [66, 761], [204, 761], [311, 761], [363, 718], [400, 718], [409, 718], [473, 718], [547, 707], [569, 707], [601, 707], [612, 686], [632, 675], [696, 621], [717, 675], [729, 675], [739, 557]].forEach(([x, y]) => {
    add(prices, 'circle', { cx: x * .34435, cy: 1610 + y / 3, r: 3, fill: '#3d74b8' });
});

// MACD bars, [minute, height], filled in between
const keys = [[0, 6], [1, 14], [2, 21], [3, 21], [4, 19], [5, 15], [6, 12], [7, 11], [8, 7], [9, 4], [10, 0], [11, -7], [12, -10], [14, -11], [16, -14], [18, -19], [19, -16], [21, -9], [22, -15], [24, -22], [25, -22], [26, -16], [28, -13], [30, -11], [31, -4], [33, -3], [34, 0], [35, 2], [36, 5], [37, 7], [38, 8], [39, 3], [40, 0], [41, 0], [42, -3], [44, -9], [47, -11], [50, -6], [52, -6], [54, -11], [55, -11], [57, -6], [59, -1], [60, 2], [62, 7], [65, 12], [68, 15], [71, 16], [75, 13], [79, 7], [81, 3], [82, 0], [84, -3], [86, 0], [87, 2], [90, 2], [91, 6], [94, 6], [95, 7], [96, 0], [98, -4], [103, -10], [108, -8], [109, -3], [110, 0], [111, 3], [114, 5], [118, 5], [119, 2], [121, -2], [123, -8], [125, -5], [129, -10], [131, -6], [133, 1], [139, 4], [140, 2], [141, -2], [146, -5], [150, -3], [156, -4], [158, 0], [161, 0], [164, -4], [166, -1], [168, -1], [169, 7], [171, 19], [172, 20], [174, 10], [176, 0], [178, -5], [183, -10], [186, -1], [188, 4], [190, 0], [192, 1], [194, 4], [196, -1], [199, -7], [204, -12], [205, -1], [207, 5], [209, 18], [211, 26], [214, 29], [216, 35], [219, 32], [221, 18], [225, 9], [227, -2], [231, -13], [234, -14], [239, -7]];
const bars = document.getElementById('bars');
for (let k = 0; k < keys.length - 1; k++) {
    const [from, a] = keys[k];
    const [to, b] = keys[k + 1];
    for (let n = from; n < to; n++) {
        const v = a + (b - a) * (n - from) / (to - from);
        const h = Math.max(Math.abs(v), .6);
        add(bars, 'rect', { x: 259.6 + n * 3.37, y: v > 0 ? 2056 - h : 2056, width: 2.5, height: h, fill: v > 0 ? '#dc3c3c' : '#129e12' });
    }
}

const macdLines = add(document.getElementById('macd-lines'), 'g', { transform: 'translate(0 1950) scale(.68878 .33333)' });
line(macdLines, '378,316 385,290 392,268 400,262 415,255 425,262 440,290 455,310 465,330 480,352 490,372 500,388 515,396 527,400 540,388 560,370 580,383 595,402 610,418 630,422 650,443 665,436 680,422 700,395 725,362 745,344 770,335 785,348 805,345 820,330 843,321 860,335 880,356 913,373 920,360 940,350 962,345 980,368 995,373 1015,393 1030,382 1058,372 1080,385 1100,393 1140,402 1165,398 1178,404 1202,402 1215,360 1222,350 1240,368 1260,392 1280,406 1300,390 1315,396 1332,387 1350,402 1375,432 1390,402 1405,360 1425,305 1440,265 1453,240 1465,245 1478,248 1495,270 1510,290 1525,310 1550,321', '#222', 2);
line(macdLines, '378,318 400,285 425,265 440,272 465,298 485,335 505,370 530,387 560,378 580,379 600,392 630,408 655,430 670,434 690,425 720,400 745,375 770,352 790,345 815,340 840,331 855,331 880,345 915,365 940,357 970,350 1000,365 1020,380 1060,375 1090,382 1140,397 1200,402 1225,375 1240,370 1270,388 1290,395 1330,390 1355,400 1380,416 1395,408 1410,385 1430,340 1450,290 1470,262 1485,256 1500,264 1525,290 1550,310', '#e8c32c', 2.2);
```
